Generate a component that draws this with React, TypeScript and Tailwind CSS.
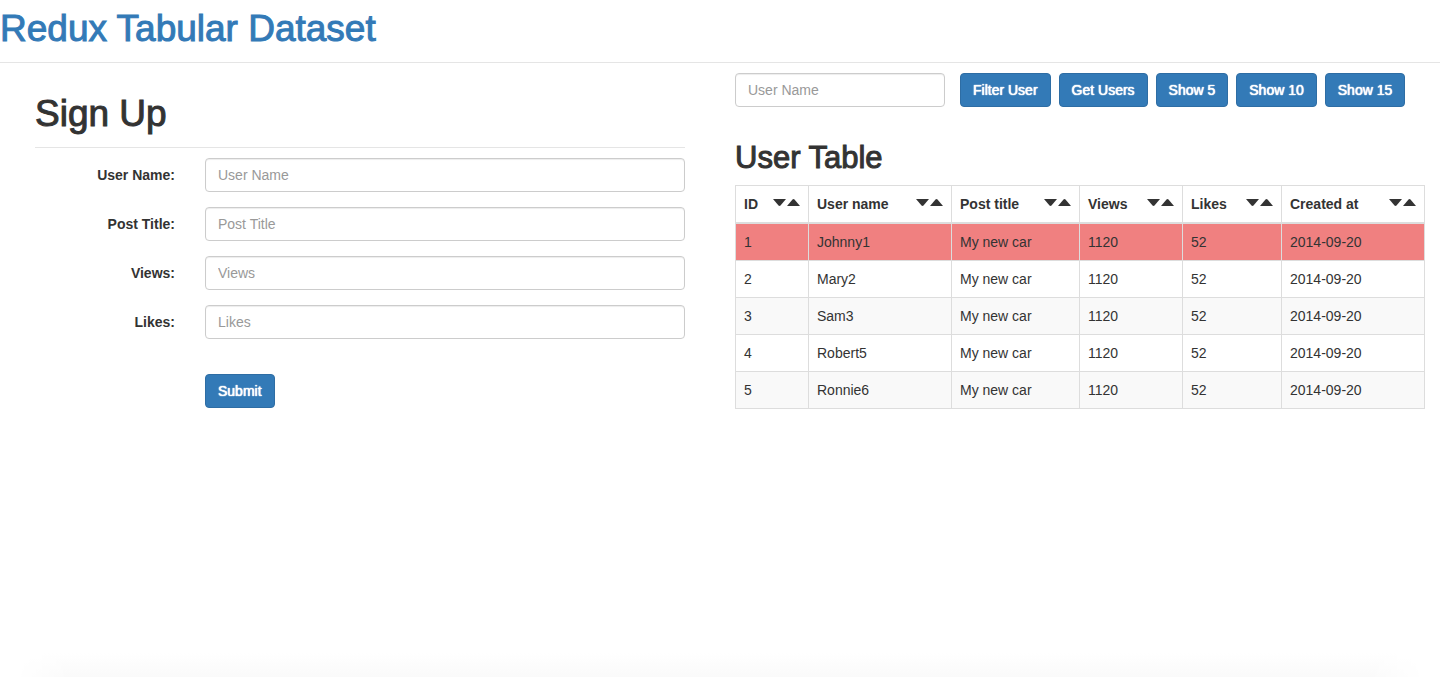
import React from 'react';

const fields = ['User Name', 'Post Title', 'Views', 'Likes'];

const actions = ['Filter User', 'Get Users', 'Show 5', 'Show 10', 'Show 15'];

const columns = [
  { title: 'ID', width: 'w-[73px]' },
  { title: 'User name', width: 'w-[143px]' },
  { title: 'Post title', width: 'w-[128px]' },
  { title: 'Views', width: 'w-[103px]' },
  { title: 'Likes', width: 'w-[99px]' },
  { title: 'Created at', width: 'w-[143px]' },
];

const users = ['Johnny1', 'Mary2', 'Sam3', 'Robert5', 'Ronnie6'].map((name, index) => ({
  id: index + 1,
  name,
  post: 'My new car',
  views: 1120,
  likes: 52,
  created: '2014-09-20',
}));

const SELECTED_ID = 1;

function rowColor(id: number) {
  if (id === SELECTED_ID) return 'bg-[#f08080]';
  return id % 2 === 1 ? 'bg-[#f9f9f9]' : 'bg-white';
}

function TextField({ id, placeholder, label }: { id: string; placeholder: string; label?: string }) {
  return (
    <input
      id={id}
      type="text"
      placeholder={placeholder}
      aria-label={label}
      className="block h-[34px] w-full rounded-sm border border-[#cccccc] bg-white px-3 text-sm text-[#555555] shadow-[inset_0_1px_1px_rgba(0,0,0,0.075)] placeholder:text-[#999999]"
    />
  );
}

function Button({ children, type = 'button' }: { children: React.ReactNode; type?: 'button' | 'submit' }) {
  return (
    <button
      type={type}
      className="h-[34px] rounded-sm border border-[#2e6da4] bg-[#337ab7] px-3 text-sm whitespace-nowrap text-white [text-shadow:0_0_1px_#ffffff,0_0_1px_#ffffff]"
    >
      {children}
    </button>
  );
}

function SortButtons({ title }: { title: string }) {
  return (
    <span className="flex h-5 items-center gap-px pb-1">
      <button type="button" aria-label={`Sort ${title} descending`}>
        <svg viewBox="0 0 13 7" className="block h-[7px] w-[13px]" fill="#333333">
          <path d="M0 0H13L7.5 6.5Q6.5 7.4 5.5 6.5Z" />
        </svg>
      </button>
      <button type="button" aria-label={`Sort ${title} ascending`}>
        <svg viewBox="0 0 13 7" className="block h-[7px] w-[13px]" fill="#333333">
          <path d="M0 7H13L7.5 0.5Q6.5 -0.4 5.5 0.5Z" />
        </svg>
      </button>
    </span>
  );
}

function SignUp() {
  return (
    <section className="px-[35px] pt-[31px]">
      <h2 className="border-b border-[#e5e5e5] pb-[13px] text-[37px] leading-10 [-webkit-text-stroke:1px_#333333]">
        Sign Up
      </h2>
      <form className="pt-[10px]" onSubmit={(event) => event.preventDefault()}>
        <div className="flex flex-col gap-[15px]">
          {fields.map((field) => {
            const id = field.toLowerCase().replace(' ', '-');
            return (
              <div key={field} className="flex items-center gap-[30px]">
                <label htmlFor={id} className="w-[140px] shrink-0 text-right font-bold">
                  {field}:
                </label>
                <TextField id={id} placeholder={field} />
              </div>
            );
          })}
        </div>
        <div className="pt-[35px] pl-[170px]">
          <Button type="submit">Submit</Button>
        </div>
      </form>
    </section>
  );
}

function UserTable() {
  return (
    <section className="px-[15px] pt-[10px]">
      <div className="flex gap-[15px]">
        <div className="w-[210px]">
          <TextField id="filter" placeholder="User Name" label="Filter by user name" />
        </div>
        <div className="flex gap-2">
          {actions.map((action) => (
            <Button key={action}>{action}</Button>
          ))}
        </div>
      </div>
      <h2 className="pt-[33px] pb-[9px] text-[31px] leading-9 [-webkit-text-stroke:1px_#333333]">User Table</h2>
      <table className="w-full table-fixed border-collapse border border-[#dddddd]">
        <thead>
          <tr>
            {columns.map((column) => (
              <th
                key={column.title}
                scope="col"
                className={`${column.width} border border-b-2 border-[#dddddd] p-2 text-left font-bold`}
              >
                <div className="flex justify-between">
                  <span>{column.title}</span>
                  <SortButtons title={column.title} />
                </div>
              </th>
            ))}
          </tr>
        </thead>
        <tbody>
          {users.map((user) => (
            <tr key={user.id} className={rowColor(user.id)}>
              {Object.entries(user).map(([key, value]) => (
                <td key={key} className="border border-[#dddddd] p-2">
                  {value}
                </td>
              ))}
            </tr>
          ))}
        </tbody>
      </table>
    </section>
  );
}

export default function App() {
  return (
    <div className="flex min-h-screen flex-col bg-white font-['Liberation_Sans',Arial,sans-serif] text-sm leading-5 text-[#333333]">
      <header className="border-b border-[#e5e5e5] pt-[9px] pb-[13px]">
        <h1 className="text-[37px] leading-10 text-[#337ab7] [-webkit-text-stroke:1px_#337ab7]">
          <a href="#">Redux Tabular Dataset</a>
        </h1>
      </header>
      <main className="grid grid-cols-2">
        <SignUp />
        <UserTable />
      </main>
      <div className="mt-auto h-6 bg-linear-to-b from-white to-[#fafafa] [mask-image:linear-gradient(to_right,transparent_15px,black_70px,black_calc(100%-70px),transparent_calc(100%-15px))]" />
    </div>
  );
}
